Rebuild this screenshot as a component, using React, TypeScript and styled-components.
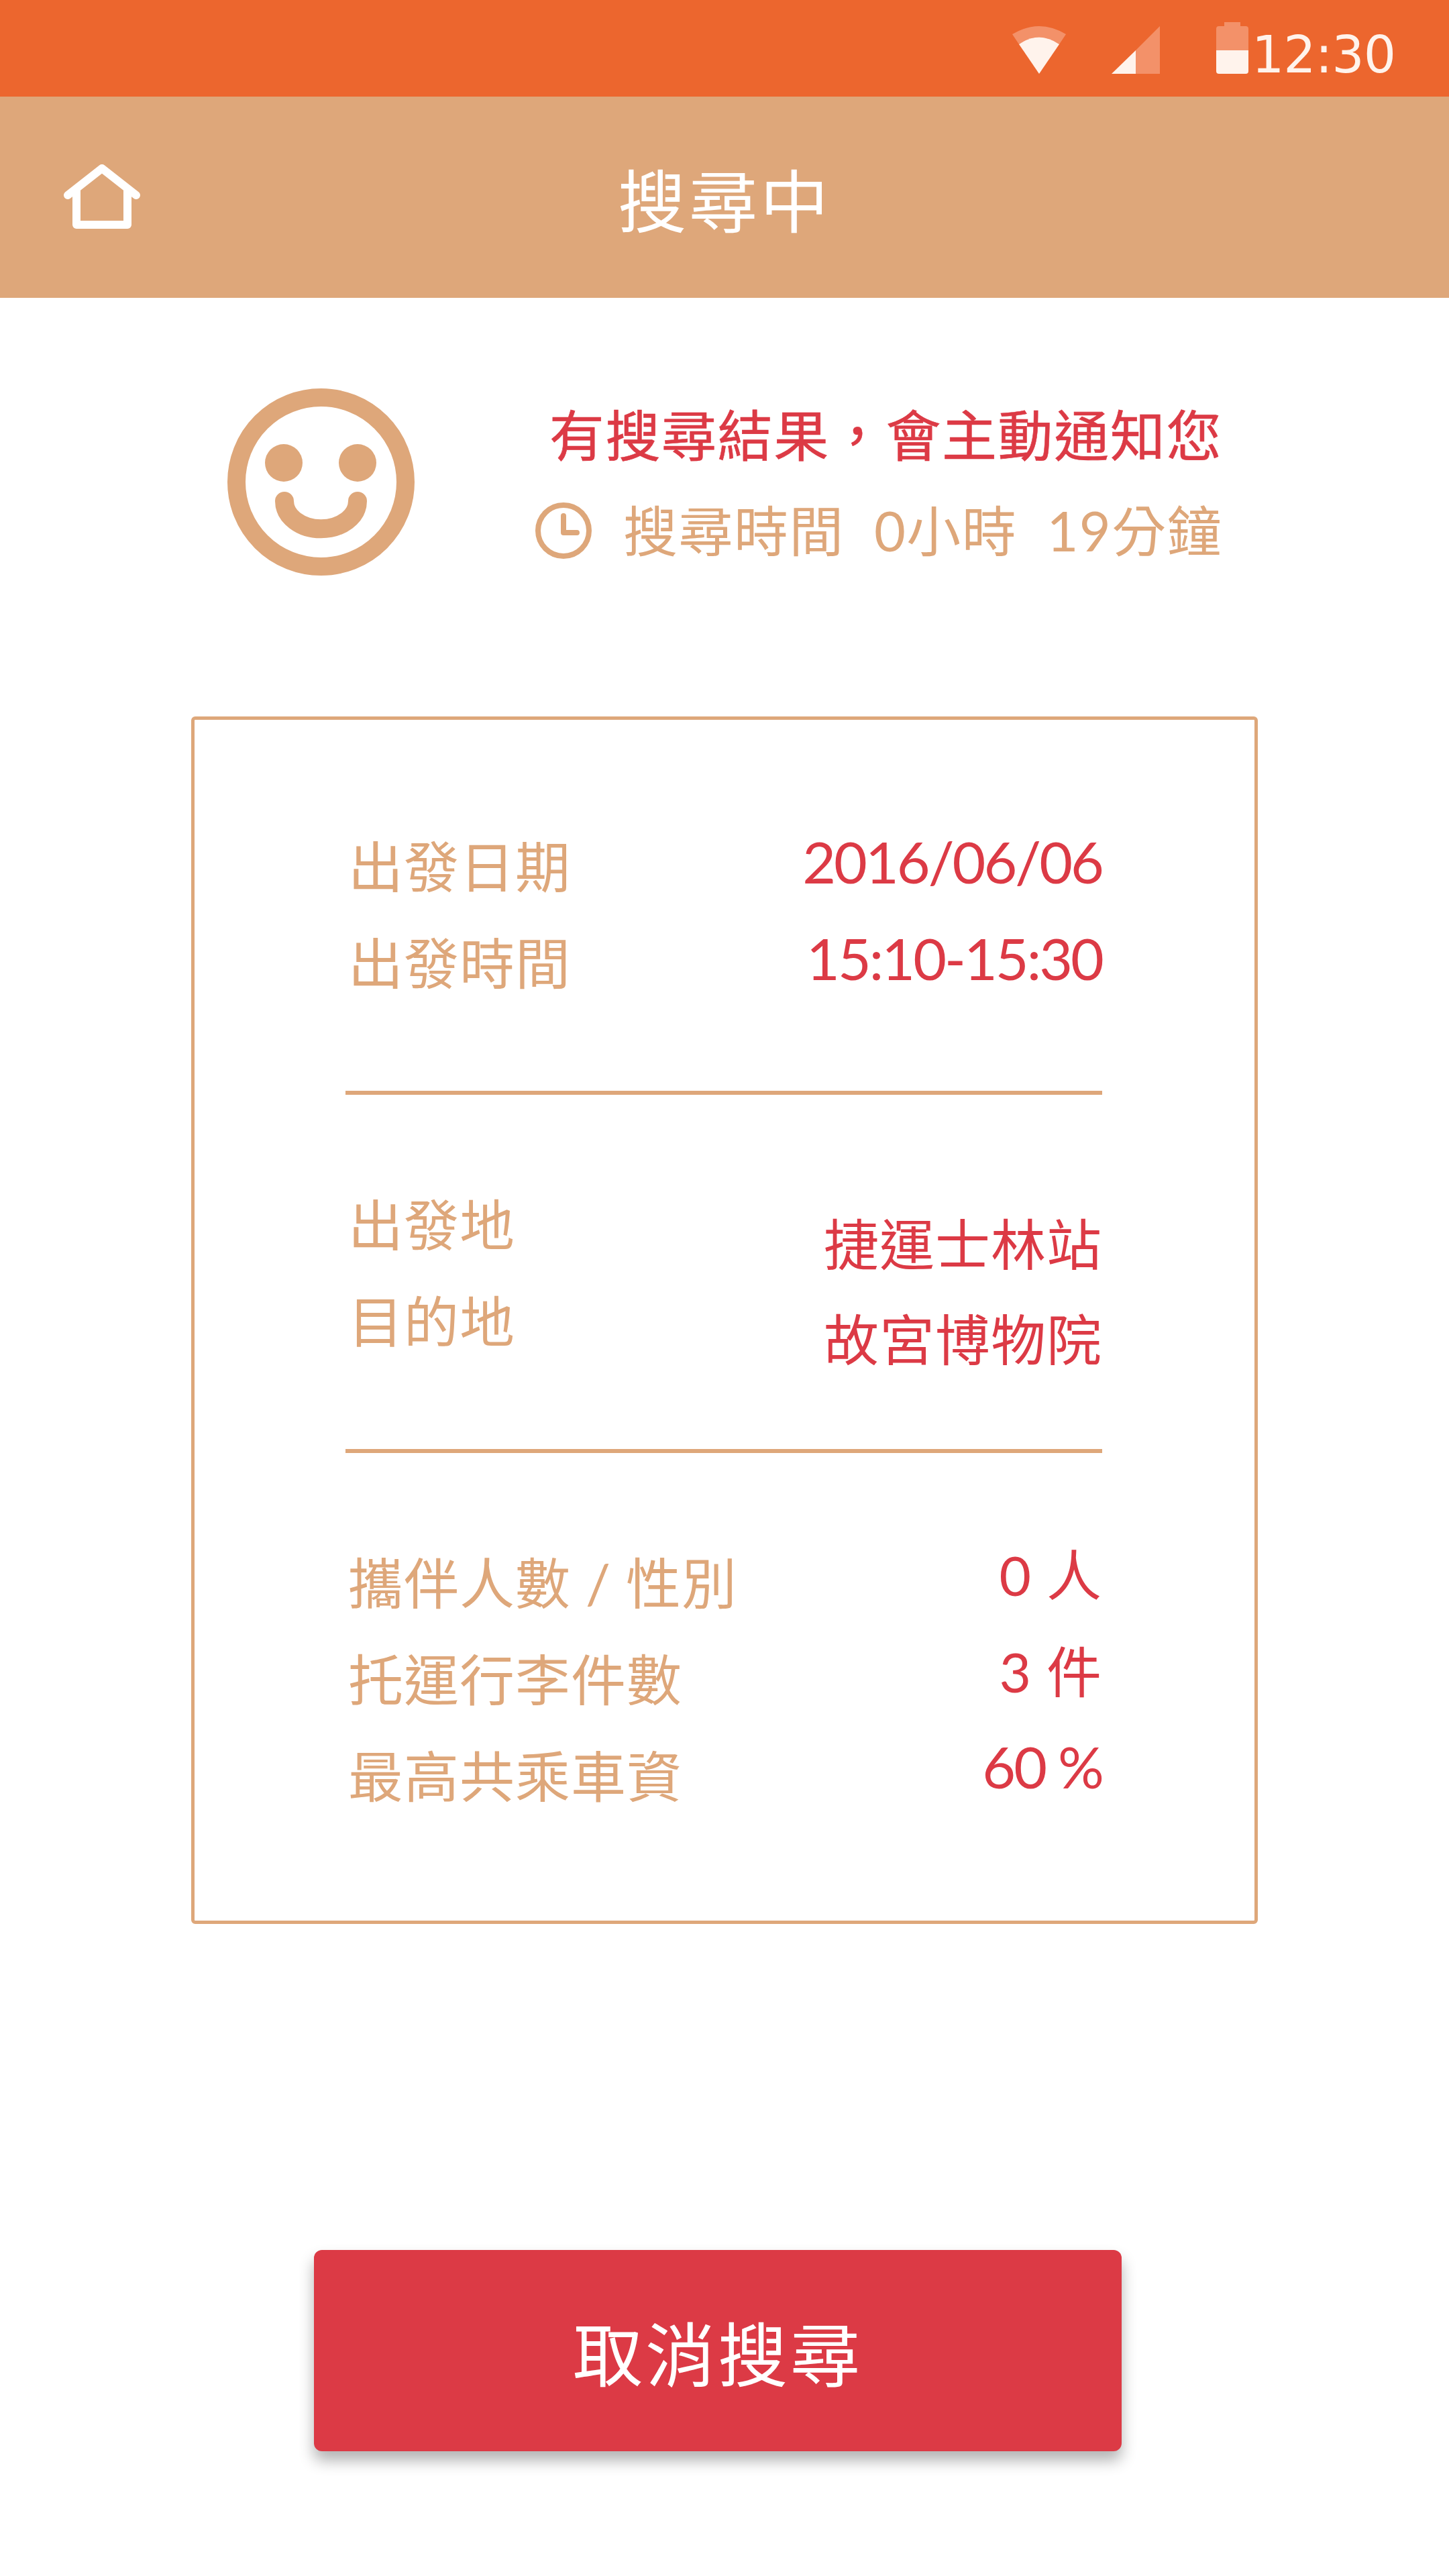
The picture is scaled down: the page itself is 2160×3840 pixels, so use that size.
import React from 'react';
import styled, { createGlobalStyle } from 'styled-components';

const TAN = '#dea77a';
const RED = '#dc3a45';
const FONT = '"Lato", "Noto Sans CJK TC", sans-serif';

const GlobalStyle = createGlobalStyle`
  html, body {
    margin: 0;
    padding: 0;
    background: #ffffff;
  }
`;

const Page = styled.div`
  display: flex;
  flex-direction: column;
  width: 2160px;
  height: 3840px;
  overflow: hidden;
  background: #ffffff;
  font-family: ${FONT};
`;

const StatusBar = styled.div`
  display: flex;
  align-items: flex-start;
  justify-content: flex-end;
  height: 144px;
  padding-right: 80px;
  box-sizing: border-box;
  background: #ec662e;
`;

const StatusIcon = styled.svg`
  display: block;
  flex: none;
  margin-top: 33px;
  margin-left: ${props => props.$left}px;
`;

const Clock = styled.span`
  margin-top: 36px;
  margin-left: 5px;
  font-family: "DejaVu Sans", sans-serif;
  font-size: 76px;
  line-height: 92px;
  letter-spacing: -1px;
  color: #fff3ec;
`;

const AppBar = styled.header`
  display: grid;
  grid-template-columns: 300px 1fr 300px;
  align-items: center;
  height: 300px;
  background: ${TAN};
`;

const HomeButton = styled.svg`
  display: block;
  margin-left: 95px;
`;

const Title = styled.h1`
  margin: 0;
  padding-top: 12px;
  font-size: 102px;
  font-weight: 400;
  line-height: 120px;
  letter-spacing: 4px;
  text-align: center;
  color: #ffffff;
`;

const Notice = styled.section`
  display: flex;
  justify-content: space-between;
  height: 624px;
  padding: 135px 338px 0 339px;
  box-sizing: border-box;
`;

const Smiley = styled.svg`
  display: block;
  flex: none;
`;

const NoticeText = styled.div`
  display: flex;
  flex-direction: column;
  align-items: flex-end;
  margin-top: -2px;
`;

const NoticeTitle = styled.div`
  font-size: 82px;
  font-weight: 400;
  line-height: 142px;
  letter-spacing: 1.6px;
  white-space: nowrap;
  color: ${RED};
  -webkit-text-stroke: 0.6px ${RED};
`;

const Elapsed = styled.div`
  display: flex;
  align-items: center;
  gap: 47px;
  font-size: 81px;
  line-height: 144px;
  letter-spacing: 1.4px;
  white-space: pre;
  color: ${TAN};
`;

const Card = styled.section`
  display: flex;
  flex-direction: column;
  width: 1590px;
  height: 1800px;
  margin-left: 285px;
  padding: 146px 227px 0 225px;
  box-sizing: border-box;
  border: 5px solid ${TAN};
  border-radius: 6px;
`;

const Group = styled.div`
  display: flex;
  justify-content: space-between;
  align-items: flex-start;
`;

const Column = styled.div`
  display: flex;
  flex-direction: column;
  margin-top: ${props => props.$shift || 0}px;
  margin-bottom: ${props => -(props.$shift || 0)}px;
`;

const Label = styled.div`
  padding-left: 4px;
  font-size: 82px;
  line-height: 144px;
  letter-spacing: 1px;
  white-space: nowrap;
  color: ${TAN};
`;

const Value = styled.div`
  font-size: ${props => (props.$digits ? 86 : 82)}px;
  line-height: ${props => props.$line || 144}px;
  letter-spacing: ${props => (props.$digits ? -3 : 1)}px;
  text-align: right;
  white-space: nowrap;
  color: ${RED};
`;

const Divider = styled.hr`
  height: 6px;
  margin: 119px 0 121px;
  border: 0;
  background: ${TAN};
`;

const CancelButton = styled.button`
  display: block;
  width: 1204px;
  height: 300px;
  margin: 486px 0 0 468px;
  padding: 0;
  border: 0;
  border-radius: 12px;
  background: ${RED};
  box-shadow: 0 14px 22px rgba(0, 0, 0, 0.3);
  font-family: ${FONT};
  font-size: 104px;
  letter-spacing: 4px;
  color: #ffffff;
`;

const App: React.FC = () => {
  return (
    <Page>
      <GlobalStyle />
      <StatusBar>
        <StatusIcon $left={0} width="80" height="78" viewBox="0 0 80 78">
          <path d="M0 18 Q40 -6 80 18 L70 33 Q40 12 10 33 Z" fill="#f39169" />
          <path d="M10 33 Q40 12 70 33 L40 77 Z" fill="#fff3ec" />
        </StatusIcon>
        <StatusIcon $left={68} width="72" height="78" viewBox="0 0 72 78">
          <path d="M36 42 L72 6 V77 H36 Z" fill="#f39169" />
          <path d="M0 77 L36 42 V77 Z" fill="#fff3ec" />
        </StatusIcon>
        <StatusIcon $left={84} width="48" height="78" viewBox="0 0 48 78">
          <path d="M12 0 H36 V6 H44 Q48 6 48 10 V42 H0 V10 Q0 6 4 6 H12 Z" fill="#f39169" />
          <path d="M0 42 H48 V73 Q48 77 44 77 H4 Q0 77 0 73 Z" fill="#fff3ec" />
        </StatusIcon>
        <Clock>12:30</Clock>
      </StatusBar>
      <AppBar>
        <HomeButton width="114" height="98" viewBox="0 0 114 98">
          <path
            d="M6 46 L57 6 L108 46 M19 36 V90 H95 V36"
            fill="none"
            stroke="#ffffff"
            strokeWidth="12"
            strokeLinecap="round"
            strokeLinejoin="round"
          />
        </HomeButton>
        <Title>搜尋中</Title>
      </AppBar>
      <Notice>
        <Smiley width="279" height="279" viewBox="0 0 279 279">
          <circle cx="139.5" cy="139.5" r="126" fill="none" stroke={TAN} strokeWidth="27" />
          <circle cx="84" cy="111" r="28" fill={TAN} />
          <circle cx="194" cy="111" r="28" fill={TAN} />
          <path d="M85 168 A54 41 0 0 0 194 168" fill="none" stroke={TAN} strokeWidth="28" strokeLinecap="round" />
        </Smiley>
        <NoticeText>
          <NoticeTitle>有搜尋結果，會主動通知您</NoticeTitle>
          <Elapsed>
            <svg width="84" height="84" viewBox="0 0 84 84">
              <circle cx="42" cy="42" r="38" fill="none" stroke={TAN} strokeWidth="8" />
              <path d="M42 20 V45 H62" fill="none" stroke={TAN} strokeWidth="8" strokeLinecap="round" strokeLinejoin="round" />
            </svg>
            <span>搜尋時間  0小時  19分鐘</span>
          </Elapsed>
        </NoticeText>
      </Notice>
      <Card>
        <Group>
          <Column>
            <Label>出發日期</Label>
            <Label>出發時間</Label>
          </Column>
          <Column $shift={-7}>
            <Value $digits>2016/06/06</Value>
            <Value $digits>15:10-15:30</Value>
          </Column>
        </Group>
        <Divider />
        <Group>
          <Column>
            <Label>出發地</Label>
            <Label>目的地</Label>
          </Column>
          <Column $shift={30}>
            <Value $line={142}>捷運士林站</Value>
            <Value $line={142}>故宮博物院</Value>
          </Column>
        </Group>
        <Divider />
        <Group>
          <Column>
            <Label>攜伴人數 / 性別</Label>
            <Label>托運行李件數</Label>
            <Label>最高共乘車資</Label>
          </Column>
          <Column $shift={-12}>
            <Value>0 人</Value>
            <Value>3 件</Value>
            <Value $digits $line={140}>60 %</Value>
          </Column>
        </Group>
      </Card>
      <CancelButton>取消搜尋</CancelButton>
    </Page>
  );
};

export default App;
